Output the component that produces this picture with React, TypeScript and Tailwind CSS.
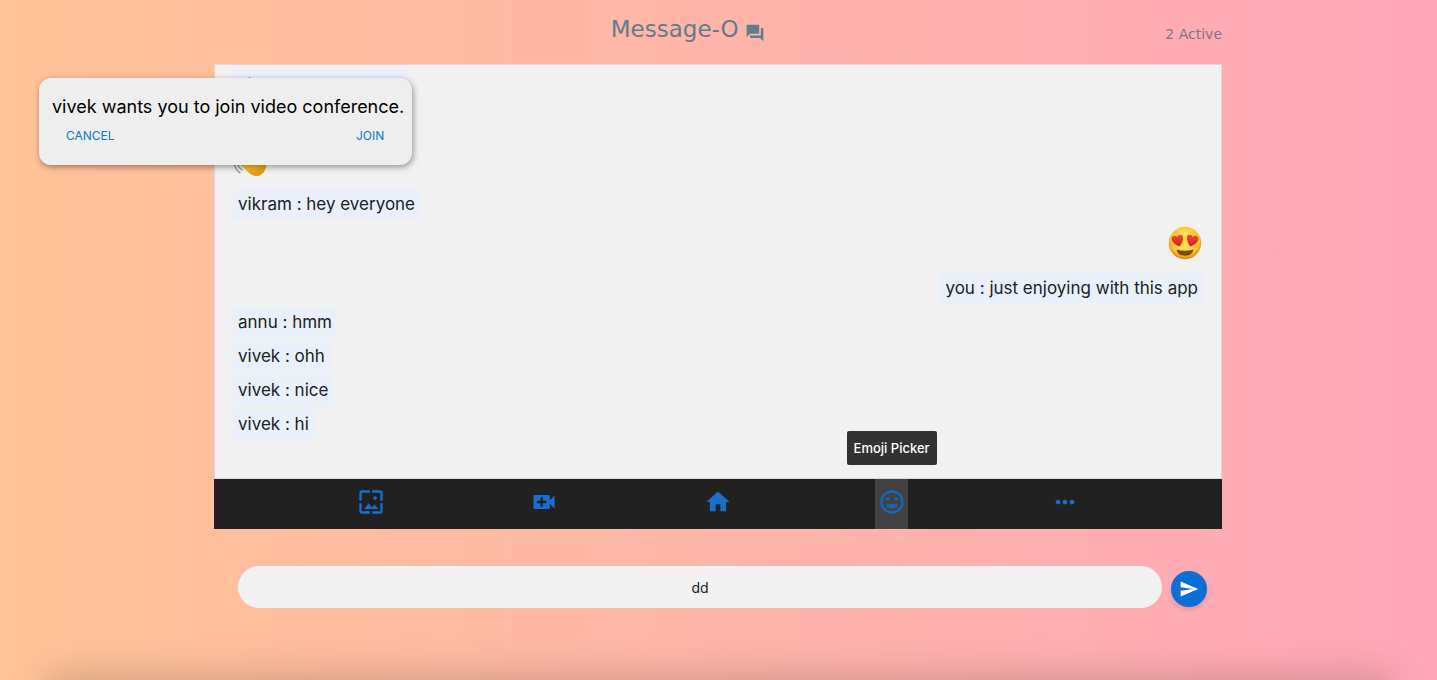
import type { ReactNode } from "react";
import { MdWallpaper, MdVideoCall, MdHome, MdMoreHoriz, MdSend, MdQuestionAnswer } from "react-icons/md";

type Message = { author: string; text: string; own?: boolean };

function HeartEyes() {
  return (
    <svg viewBox="0 0 34 34" className="size-[34px]" role="img" aria-label="Heart eyes">
      <defs>
        <radialGradient id="face" cx="50%" cy="42%" r="58%">
          <stop offset="0.4" stopColor="#ffe04a" />
          <stop offset="0.75" stopColor="#fcc22c" />
          <stop offset="1" stopColor="#df8410" />
        </radialGradient>
        <linearGradient id="heart" x1="0" y1="0" x2="0" y2="1">
          <stop offset="0" stopColor="#f8443a" />
          <stop offset="1" stopColor="#d3201f" />
        </linearGradient>
      </defs>
      <circle cx="17" cy="17" r="16.2" fill="url(#face)" />
      <path d="M11.6 20.6C7 18.4 3.4 15.6 3.6 12.2C3.8 9.6 7.2 8.6 9.2 11.2C10.6 8 14.6 8.2 15 11.2C15.4 14.4 13.6 17.8 11.6 20.6Z" fill="url(#heart)" />
      <path d="M22.4 20.6C27 18.4 30.6 15.6 30.4 12.2C30.2 9.6 26.8 8.6 24.8 11.2C23.4 8 19.4 8.2 19 11.2C18.6 14.4 20.4 17.8 22.4 20.6Z" fill="url(#heart)" />
      <path d="M8.6 23.4Q17 26 25.4 23.4Q24.4 29.8 17 29.8Q9.6 29.8 8.6 23.4Z" fill="#7b4a0c" />
    </svg>
  );
}

function WavingHand() {
  return (
    <svg viewBox="0 0 34 34" className="size-[34px]" role="img" aria-label="Waving hand">
      <defs>
        <linearGradient id="hand" x1="0" y1="0" x2="0.3" y2="1">
          <stop offset="0" stopColor="#ffdf4f" />
          <stop offset="0.75" stopColor="#fcc325" />
          <stop offset="1" stopColor="#e59a12" />
        </linearGradient>
      </defs>
      <path d="M5 10L9 6L18 14L16 5L20 4L26 15L32 18Q35 26 29 31Q23 36 16 30L5 19Z" fill="url(#hand)" />
      <path d="M1 21Q3 27 7 30M4 20Q6 25 9 27" fill="none" stroke="#8f8f8f" strokeWidth="1.2" strokeLinecap="round" />
    </svg>
  );
}

function SmileIcon() {
  return (
    <svg viewBox="0 0 24 24" className="size-7" fill="currentColor" aria-hidden="true">
      <path d="M12 2C6.47 2 2 6.47 2 12s4.47 10 10 10 10-4.47 10-10S17.53 2 12 2zm0 18c-4.42 0-8-3.58-8-8s3.58-8 8-8 8 3.58 8 8-3.58 8-8 8z" />
      <circle cx="8.5" cy="9.5" r="1.5" />
      <circle cx="15.5" cy="9.5" r="1.5" />
      <path d="M12 17.5c2.33 0 4.31-1.46 5.11-3.5H6.89c.8 2.04 2.78 3.5 5.11 3.5z" />
    </svg>
  );
}

function Bubble({ author, text, own }: Message) {
  return (
    <li className={own ? "flex h-[34px] shrink-0 items-start justify-end" : "flex h-[34px] shrink-0 items-start"}>
      <p className="rounded bg-[#e9f0fa] px-[5px] leading-[31px]">
        {author} : {text}
      </p>
    </li>
  );
}

function BarButton({ label, active, children }: { label: string; active?: boolean; children: ReactNode }) {
  return (
    <div className="relative flex justify-center">
      <button
        type="button"
        aria-label={label}
        className={
          active
            ? "flex h-[50px] w-[33px] justify-center bg-[#424242] pt-[9px] text-[#1467bd]"
            : "flex h-[50px] w-[33px] justify-center pt-[9px] text-[#1570cf]"
        }
      >
        {children}
      </button>
      {active && (
        <span
          role="tooltip"
          className="absolute bottom-16 rounded-xs bg-[#323232] px-[7px] text-[13px] leading-[34px] font-medium whitespace-nowrap text-white"
        >
          {label}
        </span>
      )}
    </div>
  );
}

export default function App() {
  return (
    <div className="relative min-h-screen overflow-hidden bg-linear-to-r from-[#ffc397] to-[#ffa6b9] pr-px font-['Inter','Liberation_Sans',sans-serif] text-[#212121]">
      <main className="mx-auto w-full max-w-[1008px]">
        <header className="flex h-16 items-start gap-1 font-['DejaVu_Sans',Verdana,sans-serif] text-[#607d8b]">
          <h1 className="flex flex-1 items-center justify-center gap-1.5 pt-3 text-[23px] leading-[34px]">
            Message-O
            <MdQuestionAnswer className="mt-2 size-5" aria-hidden="true" />
          </h1>
          <span className="pt-6 text-sm leading-5 text-[#7b7787]">2 Active</span>
        </header>

        <section className="flex h-[415px] flex-col justify-end overflow-hidden border border-[#dcd8da] bg-[#f1f1f1] px-[18px] pb-[35px] text-[17px]">
          <ul className="flex flex-col">
            <Bubble author="vivek" text="hey everyone" />
            <li className="flex h-[85px] shrink-0 items-end pb-3">
              <WavingHand />
            </li>
            <Bubble author="vikram" text="hey everyone" />
            <li className="flex h-[50px] shrink-0 items-start justify-end px-px pt-[3px]">
              <HeartEyes />
            </li>
            <Bubble author="you" text="just enjoying with this app" own />
            <Bubble author="annu" text="hmm" />
            <Bubble author="vivek" text="ohh" />
            <Bubble author="vivek" text="nice" />
            <Bubble author="vivek" text="hi" />
          </ul>
        </section>

        <nav className="grid grid-cols-5 bg-[#212121] px-[70px]">
          <BarButton label="Wallpaper">
            <MdWallpaper className="size-7" />
          </BarButton>
          <BarButton label="Video Call">
            <MdVideoCall className="size-7" />
          </BarButton>
          <BarButton label="Home">
            <MdHome className="size-7" />
          </BarButton>
          <BarButton label="Emoji Picker" active>
            <SmileIcon />
          </BarButton>
          <BarButton label="More">
            <MdMoreHoriz className="size-7" />
          </BarButton>
        </nav>

        <form className="flex items-center gap-[9px] pt-[37px] pr-[15px] pl-6" onSubmit={(e) => e.preventDefault()}>
          <input
            aria-label="Message"
            defaultValue="dd"
            className="h-[42px] min-w-0 flex-1 rounded-full bg-[#f1f1f1] text-center text-sm outline-none"
          />
          <button
            type="submit"
            aria-label="Send"
            className="mt-1 flex size-9 items-center justify-center rounded-full bg-[#0b6fd8] text-white shadow-md"
          >
            <MdSend className="size-5" />
          </button>
        </form>
      </main>

      <div
        role="dialog"
        aria-label="Video conference invitation"
        className="absolute top-[78px] left-[39px] h-[87px] rounded-xl bg-[#eeeeee] pt-4 pr-2 pl-[13px] shadow-[1px_2px_6px_rgba(0,0,0,0.4)]"
      >
        <p className="text-lg leading-[26px] text-black">vivek wants you to join video conference.</p>
        <div className="flex justify-between pt-1.5 pr-5 pl-3.5 text-[12px] leading-5 text-[#0b78d8]">
          <button type="button">CANCEL</button>
          <button type="button">JOIN</button>
        </div>
      </div>

      <div className="absolute inset-x-16 -bottom-6 h-3 shadow-[0_0_36px_16px_rgba(100,80,60,0.3)]" />
    </div>
  );
}
